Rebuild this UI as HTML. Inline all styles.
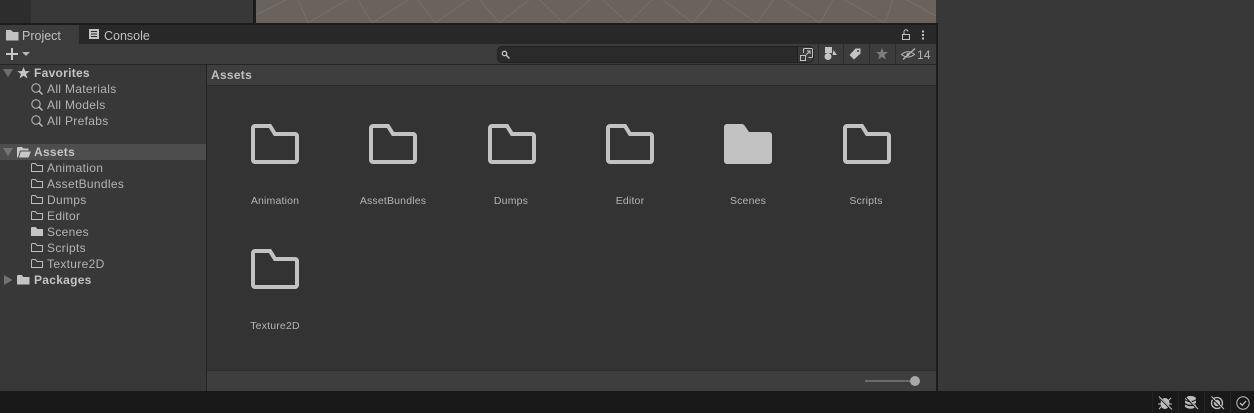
<!DOCTYPE html>
<html><head><meta charset="utf-8">
<style>
html,body{margin:0;padding:0;background:#383838}
#r{position:relative;width:1254px;height:413px;overflow:hidden;background:#383838;font-family:"Liberation Sans",sans-serif;font-size:12px;color:#b4b4b4}
#r div{position:absolute}
.t{white-space:nowrap;line-height:16px;height:16px;letter-spacing:.32px}
.b{font-weight:bold;color:#c4c4c4;letter-spacing:.28px}
.l{font-size:10.5px;line-height:14px;height:14px;width:110px;text-align:center;color:#b4b4b4;white-space:nowrap;letter-spacing:.18px}
svg{position:absolute;overflow:visible}
</style></head><body>
<div id="r">
<div style="left:0;top:0;width:31px;height:23px;background:#2d2d2d"></div>
<div style="left:31px;top:0;width:222px;height:23px;background:#383838"></div>
<div style="left:253px;top:0;width:3px;height:23px;background:#1c1c1c"></div>
<div style="left:256px;top:0;width:680px;height:23px;background:#6a625c"></div>
<svg style="left:0;top:0" width="1254" height="23" fill="none" stroke="#757069" stroke-width="1">
<path d="M256 15L286 0M298 0L308 23L347 0M358 0L372 23L408 0M418 0L435 23L468 0M480 0L499 23L529 0M540 0L563 23L590 0M603 0L628 23L652 0M663 0L693 23L712 0M723 0L757 23L773 0M785 0L820 23L833 0M845 0L885 23L893 0M907 0L936 16"/>
</svg>
<div style="left:0;top:23px;width:938px;height:2px;background:#1c1c1c"></div>
<div style="left:0;top:25px;width:936px;height:19px;background:#282828"></div>
<div style="left:0;top:25px;width:79px;height:19px;background:#3c3c3c"></div>
<div style="left:0;top:44px;width:936px;height:20px;background:#3c3c3c"></div>
<div style="left:0;top:64px;width:936px;height:1px;background:#252525"></div>
<div style="left:0;top:65px;width:206px;height:326px;background:#383838"></div>
<div style="left:206px;top:65px;width:1px;height:326px;background:#232323"></div>
<div style="left:207px;top:65px;width:729px;height:20px;background:#3e3e3e"></div>
<div style="left:207px;top:85px;width:729px;height:1px;background:#2a2a2a"></div>
<div style="left:207px;top:86px;width:729px;height:285px;background:#333333"></div>
<div style="left:207px;top:370px;width:729px;height:1px;background:#2d2d2d"></div>
<div style="left:207px;top:371px;width:729px;height:20px;background:#3e3e3e"></div>
<div style="left:936px;top:23px;width:2px;height:368px;background:#1c1c1c"></div>
<div style="left:0;top:391px;width:1254px;height:22px;background:#191919"></div>

<!-- tabs -->
<svg style="left:6px;top:30px" width="13" height="11"><path d="M0 0H5L7 2H12.500V10.500H0Z" fill="#c2c2c2"/></svg>
<div class="t" style="left:22px;top:28px;font-size:12.500px;color:#c0c0c0;letter-spacing:0">Project</div>
<svg style="left:89px;top:29px" width="10" height="11" fill="none"><rect x="0" y="0" width="10" height="10" fill="#c2c2c2"/><path d="M2 2.500H8M2 5H8M2 7.500H8" stroke="#282828"/></svg>
<div class="t" style="left:104px;top:28px;font-size:12.500px;color:#c0c0c0;letter-spacing:0">Console</div>
<svg style="left:901px;top:29px" width="24" height="12" fill="none" stroke="#c4c4c4"><rect x="1.500" y="5.500" width="7" height="5" stroke-width="1"/><path d="M3 5V3A2 2 0 0 1 7 2.500"/><path d="M22 1.500V3.500M22 5V7M22 8.500V10.500" stroke-width="2"/></svg>

<!-- toolbar -->
<svg style="left:6px;top:48px" width="26" height="13"><path d="M6 0V12M0 6H12" stroke="#c8c8c8" stroke-width="2" fill="none"/><path d="M16 4H24L20 8Z" fill="#b4b4b4"/></svg>
<div style="left:497px;top:46px;width:315px;height:15px;border-radius:5px;background:#2a2a2a;border:1px solid #212121"></div>
<div style="left:797px;top:47px;width:1px;height:15px;background:#1e1e1e"></div>
<div style="left:798px;top:47px;width:15px;height:15px;background:#3a3a3a;border-radius:0 4px 4px 0"></div>
<svg style="left:501px;top:50px" width="9" height="9" fill="none" stroke="#c4c4c4"><circle cx="3.500" cy="3.500" r="2.200" stroke-width="1.300"/><path d="M5 5L8.500 8.500" stroke-width="1.500"/></svg>
<svg style="left:800px;top:48px" width="13" height="13" fill="none" stroke="#c4c4c4"><path d="M3.500 5V1.500A1 1 0 0 1 4.500 .5H11.500A1 1 0 0 1 12.500 1.500V8.500A1 1 0 0 1 11.500 9.500H8.500"/><rect x=".5" y="7.500" width="5" height="5"/><path d="M6 7L10 3M7 3H10V6"/></svg>
<div style="left:818px;top:44px;width:1px;height:20px;background:#2c2c2c"></div>
<div style="left:843px;top:44px;width:1px;height:20px;background:#2c2c2c"></div>
<div style="left:869px;top:44px;width:1px;height:20px;background:#2c2c2c"></div>
<div style="left:895px;top:44px;width:1px;height:20px;background:#2c2c2c"></div>
<svg style="left:824px;top:47px" width="13" height="14" fill="#c4c4c4"><rect x="1" y="0" width="7" height="6"/><circle cx="4" cy="9.500" r="3.500"/><path d="M9.500 3L13 8H8.500Z"/></svg>
<svg style="left:849px;top:48px" width="12" height="12"><path d="M6.500 .5H11.500V5.500L5 11.500L.5 7Z" fill="#c4c4c4"/><circle cx="9" cy="3" r="1" fill="#3c3c3c"/></svg>
<svg style="left:876px;top:48px" width="12" height="12"><path d="M6 0L7.600 4H12L8.500 6.900L9.800 11.500L6 8.900L2.200 11.500L3.500 6.900L0 4H4.400Z" fill="#7c7c7c"/></svg>
<svg style="left:901px;top:47px" width="14" height="14" fill="none" stroke="#b8b8b8"><path d="M.5 7.500Q7 2 13.500 7.500Q7 12.500 .5 7.500Z"/><circle cx="7" cy="7.500" r="1.500" fill="#b8b8b8" stroke="none"/><path d="M2 12.500L14 1.500" stroke-width="1.200"/></svg>
<div class="t" style="left:917px;top:47px;font-size:12px;color:#b4b4b4;letter-spacing:.2px">14</div>

<!-- tree -->
<svg style="left:3px;top:69px" width="10" height="9"><path d="M0 0H10L5 8.500Z" fill="#6e6e6e"/></svg>
<svg style="left:17px;top:67px" width="13" height="12"><path d="M6.500 0L8.200 4.100H12.800L9.100 7L10.500 11.500L6.500 8.800L2.500 11.500L3.900 7L.2 4.100H4.800Z" fill="#c4c4c4"/></svg>
<div class="t b" style="left:34px;top:65px">Favorites</div>
<svg width="0" height="0" style="left:0;top:0"><defs>
<g id="m" fill="none" stroke="#bdbdbd"><circle cx="5" cy="5" r="4.200"/><path d="M8 8L11.500 11.500" stroke-width="1.500"/></g>
<path id="so" d="M.5 1.500A1 1 0 0 1 1.500 .5H4.500L6 2.500H11.500V8.500H.5Z" fill="none" stroke="#bcbcbc"/>
<path id="big" d="M253 128A2 2 0 0 1 255 126H270L275 134H295A2 2 0 0 1 297 136V160A2 2 0 0 1 295 162H255A2 2 0 0 1 253 160Z" fill="none" stroke="#c2c2c2" stroke-width="4"/>
</defs></svg>
<svg style="left:31px;top:83px" width="13" height="13"><use href="#m"/></svg>
<svg style="left:31px;top:99px" width="13" height="13"><use href="#m"/></svg>
<svg style="left:31px;top:115px" width="13" height="13"><use href="#m"/></svg>
<div class="t" style="left:47px;top:81px">All Materials</div>
<div class="t" style="left:47px;top:97px">All Models</div>
<div class="t" style="left:47px;top:113px">All Prefabs</div>

<div style="left:0;top:144px;width:206px;height:16px;background:#4d4d4d"></div>
<svg style="left:3px;top:148px" width="10" height="9"><path d="M0 0H10L5 8.500Z" fill="#727272"/></svg>
<svg style="left:17px;top:147px" width="14" height="11"><path d="M0 10.500V1A1 1 0 0 1 1 0H5L6.500 1.500H11.500V3.500H3L1 10.500Z" fill="#c8c8c8"/><path d="M3.800 4.500H14L11.500 10.500H2Z" fill="#c8c8c8"/></svg>
<div class="t b" style="left:34px;top:144px">Assets</div>
<svg style="left:31px;top:163px" width="13" height="10"><use href="#so"/></svg>
<svg style="left:31px;top:179px" width="13" height="10"><use href="#so"/></svg>
<svg style="left:31px;top:195px" width="13" height="10"><use href="#so"/></svg>
<svg style="left:31px;top:211px" width="13" height="10"><use href="#so"/></svg>
<svg style="left:31px;top:227px" width="13" height="10"><path d="M0 1A1 1 0 0 1 1 0H4.800L6.300 2H12V9H0Z" fill="#c4c4c4"/></svg>
<svg style="left:31px;top:243px" width="13" height="10"><use href="#so"/></svg>
<svg style="left:31px;top:259px" width="13" height="10"><use href="#so"/></svg>
<div class="t" style="left:47px;top:160px">Animation</div>
<div class="t" style="left:47px;top:176px">AssetBundles</div>
<div class="t" style="left:47px;top:192px">Dumps</div>
<div class="t" style="left:47px;top:208px">Editor</div>
<div class="t" style="left:47px;top:224px">Scenes</div>
<div class="t" style="left:47px;top:240px">Scripts</div>
<div class="t" style="left:47px;top:256px">Texture2D</div>
<svg style="left:4px;top:275px" width="9" height="10"><path d="M0 0L8.500 5L0 10Z" fill="#727272"/></svg>
<svg style="left:17px;top:275px" width="13" height="10"><path d="M0 1A1 1 0 0 1 1 0H4.800L6.300 2H12.500V9.500H0Z" fill="#c4c4c4"/></svg>
<div class="t b" style="left:34px;top:272px">Packages</div>

<!-- grid -->
<div class="t b" style="left:211px;top:67px;color:#c0c0c0">Assets</div>
<svg style="left:0;top:0" width="1" height="1"><use href="#big"/></svg>
<svg style="left:118px;top:0" width="1" height="1"><use href="#big"/></svg>
<svg style="left:237px;top:0" width="1" height="1"><use href="#big"/></svg>
<svg style="left:355px;top:0" width="1" height="1"><use href="#big"/></svg>
<svg style="left:724px;top:124px" width="48" height="40"><path d="M0 3A3 3 0 0 1 3 0H18A3 3 0 0 1 20.500 1.500L25 8H45A3 3 0 0 1 48 11V37A3 3 0 0 1 45 40H3A3 3 0 0 1 0 37Z" fill="#c2c2c2"/></svg>
<svg style="left:592px;top:0" width="1" height="1"><use href="#big"/></svg>
<svg style="left:0;top:125px" width="1" height="1"><use href="#big"/></svg>
<div class="l" style="left:220px;top:194px">Animation</div>
<div class="l" style="left:338px;top:194px">AssetBundles</div>
<div class="l" style="left:456px;top:194px">Dumps</div>
<div class="l" style="left:575px;top:194px">Editor</div>
<div class="l" style="left:693px;top:194px">Scenes</div>
<div class="l" style="left:811px;top:194px">Scripts</div>
<div class="l" style="left:220px;top:319px">Texture2D</div>

<!-- slider -->
<div style="left:865px;top:380px;width:48px;height:2px;background:#6a6a6a"></div>
<div style="left:910px;top:376px;width:10px;height:10px;border-radius:50%;background:#a8a8a8"></div>

<!-- status icons -->
<div style="left:1152px;top:391px;width:1px;height:22px;background:#242424"></div>
<div style="left:1178px;top:391px;width:1px;height:22px;background:#242424"></div>
<div style="left:1204px;top:391px;width:1px;height:22px;background:#242424"></div>
<div style="left:1230px;top:391px;width:1px;height:22px;background:#242424"></div>
<svg style="left:1158px;top:396px" width="14" height="14"><ellipse cx="7" cy="7.500" rx="4.500" ry="5.500" fill="#bcbcbc"/><path d="M1 2L4 5M13 2L10 5M0 8H3M14 8H11M1 13L4 10M13 13L10 10" stroke="#bcbcbc" fill="none"/><path d="M0 0L14 14" stroke="#191919" stroke-width="2"/><path d="M1 .5L14 13.500" stroke="#c8c8c8" stroke-width="1"/></svg>
<svg style="left:1184px;top:396px" width="14" height="14"><ellipse cx="6.500" cy="2.500" rx="5.500" ry="2.500" fill="#bcbcbc"/><path d="M1 4.500Q6.500 8 12 4.500V7Q6.500 10.500 1 7ZM1 8.500Q6.500 12 12 8.500V11Q6.500 14.500 1 11Z" fill="#bcbcbc"/><path d="M2 1L14 13.500" stroke="#191919" stroke-width="2"/><path d="M3 1L14 13" stroke="#c8c8c8"/></svg>
<svg style="left:1210px;top:396px" width="14" height="14" fill="none"><circle cx="7" cy="7" r="5.500" stroke="#bcbcbc" stroke-width="1.300"/><circle cx="7" cy="7" r="3.200" fill="#bcbcbc"/><path d="M1 1L14 13.500" stroke="#191919" stroke-width="2"/><path d="M1.500 .5L14 13" stroke="#c8c8c8"/></svg>
<svg style="left:1236px;top:396px" width="14" height="14" fill="none" stroke="#c0c0c0"><circle cx="7" cy="7" r="6.200"/><path d="M4 7L6.300 9.300L10 5" stroke-width="1.300"/></svg>
</div>
</body></html>
